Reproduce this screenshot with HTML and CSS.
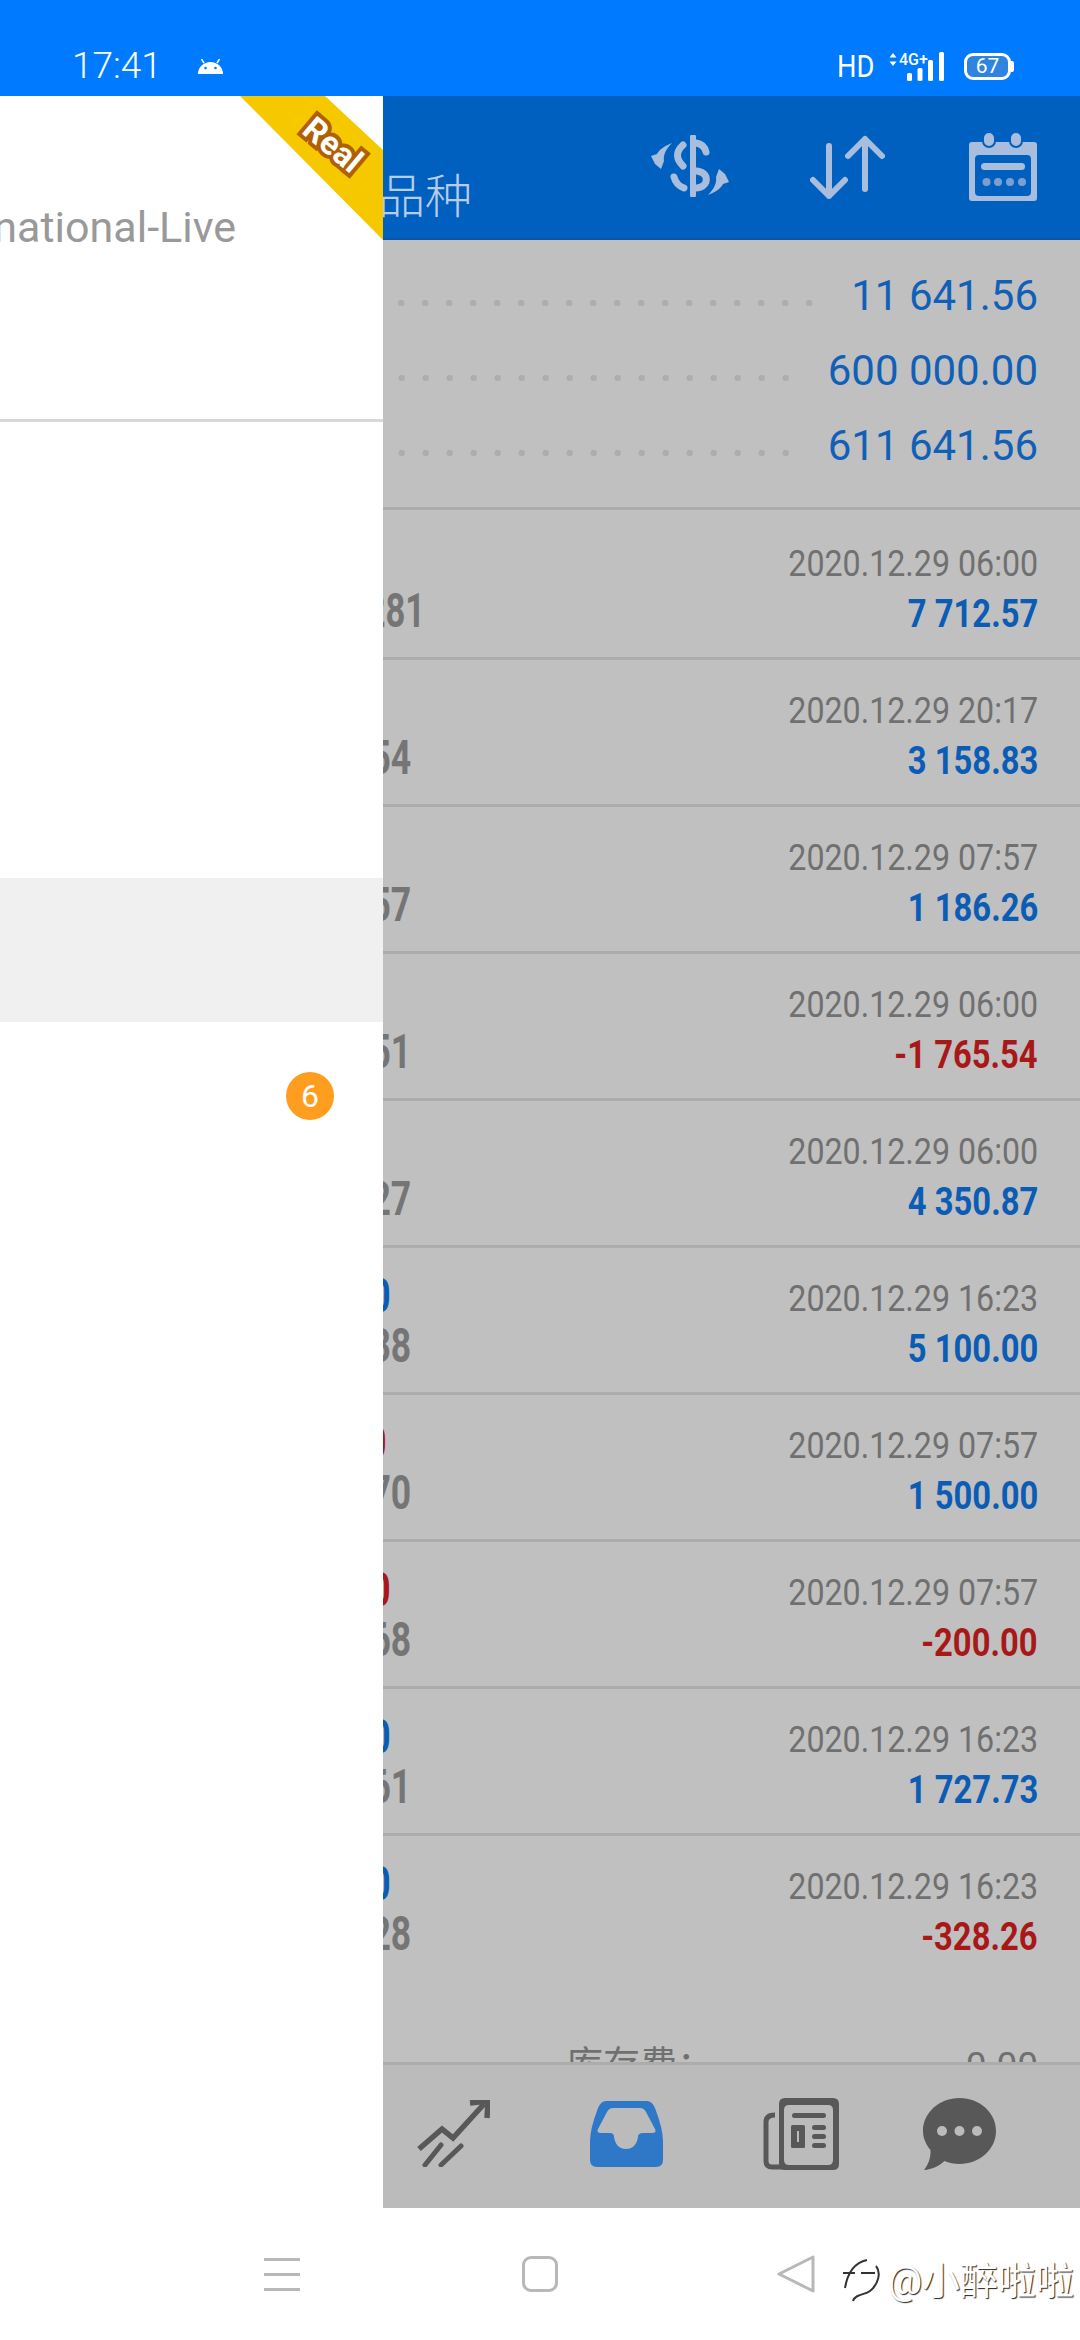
FILE: index.html
```html
<!DOCTYPE html>
<html>
<head>
    <title>历史</title>
    <link rel="stylesheet" href="styles.css">
</head>
<body>
    <div class="status-bar">
        <span class="time">17:41</span>
        <svg class="android" viewBox="0 0 25 15"><path d="M0 15a12.500 12 0 0 1 25 0z" fill="#fff"/><path d="M6 4L3.500 0M19 4l2.500-4" stroke="#fff" stroke-width="1.500"/><circle cx="7.500" cy="9" r="1.300" fill="#007aff"/><circle cx="17.500" cy="9" r="1.300" fill="#007aff"/></svg>
        <span class="hd">HD</span>
        <svg class="signal" viewBox="0 0 56 29">
            <path d="M4 1l3.500 4.500h-7zM4 14L.5 9.500h7z" fill="#fff"/>
            <text x="10" y="13" class="signal-text">4G+</text>
            <rect x="18" y="21" width="5" height="8" rx="1.500" fill="#fff"/>
            <rect x="28.500" y="16" width="5" height="13" rx="1.500" fill="#fff"/>
            <rect x="39" y="8" width="5" height="21" rx="1.500" fill="#fff"/>
            <rect x="50" y="0" width="5" height="29" rx="1.500" fill="#fff"/>
        </svg>
        <div class="battery"><span>67</span></div>
    </div>

    <div class="main">
        <div class="app">
            <div class="app-bar">
                <div class="app-title">所有品种</div>
                <svg class="icon-dollar" viewBox="0 0 80 62">
                    <path d="M43 2V60" stroke="#a8bedc" stroke-width="6" stroke-linecap="round"/>
                    <path d="M46 8Q54 9 56 17M33 10Q22 20 33 31M24 42Q26 50 34 53M47 36Q58 38 56 47Q54 52 47 53" fill="none" stroke="#a8bedc" stroke-width="7" stroke-linecap="round"/>
                    <path d="M22 8C14 11 9 15 7 19L1 21L5 29L11 34L14 26C13 20 16 14 22 8Z" fill="#a8bedc"/>
                    <path d="M22 8C14 11 9 15 7 19L1 21L5 29L11 34L14 26C13 20 16 14 22 8Z" fill="#a8bedc" transform="rotate(180 40 34)"/>
                </svg>
                <svg class="icon-sort" viewBox="0 0 75 64">
                    <path d="M19 11V61M3 45L19 61L35 45M55 4V54M38 21L55 4L72 21" fill="none" stroke="#a8bedc" stroke-width="6" stroke-linecap="round" stroke-linejoin="round"/>
                </svg>
                <svg class="icon-calendar" viewBox="0 0 70 70">
                    <path fill-rule="evenodd" d="M3 10H65Q68 10 68 13V66Q68 69 65 69H3Q0 69 0 66V13Q0 10 3 10ZM10 23Q6 23 6 27V60Q6 64 10 64H58Q62 64 62 60V27Q62 23 58 23Z" fill="#a8bedc"/>
                    <rect x="14" y="0" width="12" height="15" rx="6" fill="#a8bedc" stroke="#0060c0" stroke-width="2"/>
                    <rect x="41" y="0" width="12" height="15" rx="6" fill="#a8bedc" stroke="#0060c0" stroke-width="2"/>
                    <rect x="12" y="31" width="44" height="7" rx="3.500" fill="#a8bedc"/>
                    <g fill="#7d9fd0"><circle cx="17.500" cy="50" r="4"/><circle cx="29" cy="50" r="4"/><circle cx="41" cy="50" r="4"/><circle cx="53" cy="50" r="4"/></g>
                </svg>
            </div>

            <div class="list">
                <div class="summary">
                    <div class="sum-row"><span class="sum-label">利润：</span><span class="leader"></span><span class="sum-value">11 641.56</span></div>
                    <div class="sum-row"><span class="sum-label">信用：</span><span class="leader"></span><span class="sum-value">600 000.00</span></div>
                    <div class="sum-row"><span class="sum-label">结余：</span><span class="leader"></span><span class="sum-value">611 641.56</span></div>
                </div>

                <div class="row row-first">
                    <div class="left left-wide"><div class="l1 l1-short blue"><span>0.50</span></div><div class="l2"><span>1.22281</span></div></div>
                    <div class="right"><div class="date">2020.12.29 06:00</div><div class="amount blue"><span>7 712.57</span></div></div>
                </div>
                <div class="row">
                    <div class="left"><div class="l1 l1-short blue"><span>0.50</span></div><div class="l2"><span>1.22154</span></div></div>
                    <div class="right"><div class="date">2020.12.29 20:17</div><div class="amount blue"><span>3 158.83</span></div></div>
                </div>
                <div class="row">
                    <div class="left"><div class="l1 l1-short blue"><span>0.10</span></div><div class="l2"><span>1.22157</span></div></div>
                    <div class="right"><div class="date">2020.12.29 07:57</div><div class="amount blue"><span>1 186.26</span></div></div>
                </div>
                <div class="row">
                    <div class="left"><div class="l1 l1-short red"><span>0.10</span></div><div class="l2"><span>1.22651</span></div></div>
                    <div class="right"><div class="date">2020.12.29 06:00</div><div class="amount red"><span>-1 765.54</span></div></div>
                </div>
                <div class="row">
                    <div class="left"><div class="l1 l1-short teal"><span>0.31</span></div><div class="l2"><span>1.22727</span></div></div>
                    <div class="right"><div class="date">2020.12.29 06:00</div><div class="amount blue"><span>4 350.87</span></div></div>
                </div>
                <div class="row">
                    <div class="left"><div class="l1 blue"><span>0.50</span></div><div class="l2"><span>1.22138</span></div></div>
                    <div class="right"><div class="date">2020.12.29 16:23</div><div class="amount blue"><span>5 100.00</span></div></div>
                </div>
                <div class="row">
                    <div class="left"><div class="l1 l1-mid red"><span>0.50</span></div><div class="l2"><span>1.22170</span></div></div>
                    <div class="right"><div class="date">2020.12.29 07:57</div><div class="amount blue"><span>1 500.00</span></div></div>
                </div>
                <div class="row">
                    <div class="left"><div class="l1 red"><span>0.50</span></div><div class="l2"><span>1.22168</span></div></div>
                    <div class="right"><div class="date">2020.12.29 07:57</div><div class="amount red"><span>-200.00</span></div></div>
                </div>
                <div class="row">
                    <div class="left"><div class="l1 blue"><span>0.50</span></div><div class="l2"><span>1.22161</span></div></div>
                    <div class="right"><div class="date">2020.12.29 16:23</div><div class="amount blue"><span>1 727.73</span></div></div>
                </div>
                <div class="row row-last">
                    <div class="left"><div class="l1 blue"><span>0.50</span></div><div class="l2"><span>1.22128</span></div></div>
                    <div class="right"><div class="date">2020.12.29 16:23</div><div class="amount red"><span>-328.26</span></div></div>
                </div>

                <div class="fee-row"><span>库存费：</span><span>0.00</span></div>
            </div>

            <div class="tab-bar">
                <svg class="tab" viewBox="0 0 73 67" width="73" height="67">
                    <path d="M2 49L25 29L36 38L67 4M53 3L71 1L70 18" fill="none" stroke="#585858" stroke-width="5.500" stroke-linejoin="miter"/>
                    <path d="M8 65L24 45M24 65L44 46" fill="none" stroke="#585858" stroke-width="5" stroke-linecap="round"/>
                </svg>
                <svg class="tab" viewBox="0 0 73 66" width="73" height="66">
                    <path fill-rule="evenodd" d="M16 0H57Q62 0 65 7Q73 28 73 40V59Q73 66 66 66H7Q0 66 0 59V40Q0 28 8 7Q11 0 16 0ZM23 7Q19 7 17 11L8 28Q6 32 11 32H20Q24 32 24 36Q26 48 36 48Q46 48 48 36Q48 32 53 32H62Q67 32 65 28L56 11Q54 7 50 7Z" fill="#2f78c8"/>
                </svg>
                <svg class="tab" viewBox="0 0 76 72" width="76" height="72">
                    <path fill-rule="evenodd" d="M22 0H70Q76 0 76 6V66Q76 72 70 72H22Q16 72 16 66V6Q16 0 22 0ZM26 7Q21 7 21 12V62Q21 67 26 67H65Q70 67 70 62V12Q70 7 65 7Z" fill="#585858"/>
                    <path d="M12 17Q3 17 3 24V63Q3 69 9 69H20" fill="none" stroke="#585858" stroke-width="5"/>
                    <rect x="29" y="15" width="34" height="5" rx="2.500" fill="#585858"/>
                    <rect x="28" y="27" width="14" height="23" rx="1.500" fill="#585858"/>
                    <rect x="34" y="33" width="2" height="11" fill="#bbb"/>
                    <rect x="49" y="27" width="14" height="5" rx="2.500" fill="#585858"/>
                    <rect x="49" y="36" width="14" height="5" rx="2.500" fill="#585858"/>
                    <rect x="49" y="45" width="14" height="5" rx="2.500" fill="#585858"/>
                </svg>
                <svg class="tab tab-chat" viewBox="0 0 73 72" width="73" height="72">
                    <path d="M36.500 0C56.500 0 73 14.500 73 33C73 51.500 56.500 66 36.500 66C31 66 26 65 21.500 63C16 68 9 71.500 1 72C5 67 8 60 7.500 52C3 46.500 0 40 0 33C0 14.500 16.500 0 36.500 0Z" fill="#585858"/>
                    <g fill="#bbb"><circle cx="19" cy="33" r="5"/><circle cx="36.500" cy="33" r="5"/><circle cx="54" cy="33" r="5"/></g>
                </svg>
            </div>
        </div>

        <div class="drawer">
            <svg class="ribbon" viewBox="0 0 143 144"><path d="M0 0H85L143 54V144Z" fill="#f6c800"/></svg>
            <span class="ribbon-text">Real</span>
            <div class="drawer-head"><span>Server-International-Live</span></div>
            <div class="drawer-item drawer-item-active"></div>
            <div class="drawer-item drawer-item-badge"><span class="badge">6</span></div>
        </div>
    </div>

    <div class="nav-bar">
        <div class="nav-menu"><i></i><i></i><i></i></div>
        <div class="nav-home"></div>
        <svg class="nav-back" viewBox="0 0 38 38"><path d="M36 2V36L2 19Z" fill="none" stroke="#b8b8b8" stroke-width="3" stroke-linejoin="round"/></svg>
        <div class="watermark">
            <svg class="wm-logo" viewBox="0 0 38 46"><path d="M2 30C4 18 10 5 24 2M33 8C38 14 36 26 27 33C22 37 12 36 10 43M0 15H12M18 15H32" fill="none" stroke="#333" stroke-width="2"/></svg>
            <span>@小醉啦啦</span>
        </div>
    </div>
</body>
</html>
```

FILE: styles.css
```css
* {
    box-sizing: border-box;
}

body {
    margin: 0;
    width: 1080px;
    height: 2340px;
    display: flex;
    flex-direction: column;
    overflow: hidden;
    background: #fff;
    font-family: Roboto, "Noto Sans CJK SC", sans-serif;
}

/* status bar */
.status-bar {
    height: 96px;
    flex: none;
    display: flex;
    align-items: center;
    padding: 36px 69px 0 72px;
    background: #007aff;
    color: #fff;
}

.time {
    font-size: 37px;
    font-weight: 300;
    line-height: 60px;
}

.android {
    width: 25px;
    height: 15px;
    margin-left: 36px;
}

.hd {
    margin-left: auto;
    font-size: 31px;
    transform: scaleX(.88);
    transform-origin: right center;
}

.signal {
    width: 56px;
    height: 29px;
    margin-left: 15px;
    overflow: visible;
}

.signal-text {
    font-size: 16px;
    font-weight: 500;
    font-family: Roboto, sans-serif;
    fill: #fff;
}

.battery {
    position: relative;
    width: 47px;
    height: 27px;
    margin-left: 19px;
    border: 3px solid #fff;
    border-radius: 9px;
    background: #2f84e0;
    font-size: 21px;
    line-height: 21px;
    text-align: center;
}

.battery::after {
    content: "";
    position: absolute;
    right: -6px;
    top: 5px;
    width: 3px;
    height: 11px;
    border-radius: 0 2px 2px 0;
    background: #fff;
}

/* app */
.main {
    flex: 1;
    position: relative;
    overflow: hidden;
}

.app {
    height: 100%;
    display: flex;
    flex-direction: column;
}

.app-bar {
    height: 144px;
    flex: none;
    display: flex;
    align-items: flex-start;
    background: #0060c0;
    border-bottom: 2px solid #0a55a5;
}

.app-title {
    width: 472px;
    padding-top: 68px;
    font-size: 47px;
    line-height: 66px;
    font-weight: 300;
    text-align: right;
    color: #b8cce8;
    white-space: nowrap;
}

.icon-dollar {
    width: 80px;
    height: 62px;
    margin: 39px 0 0 178px;
}

.icon-sort {
    width: 75px;
    height: 64px;
    margin: 39px 0 0 80px;
}

.icon-calendar {
    width: 70px;
    height: 70px;
    margin: 36px 0 0 84px;
}

.list {
    flex: 1;
    min-height: 0;
    overflow: hidden;
    background: #c0c0c0;
}

.summary {
    height: 270px;
    padding-top: 18px;
    border-bottom: 3px solid #acacac;
}

.sum-row {
    height: 75px;
    display: flex;
    align-items: center;
    padding: 0 42px 0 24px;
}

.sum-label {
    font-size: 37px;
    color: #707070;
}

.leader {
    flex: 1;
    height: 8px;
    margin: 15px 30px 0 10px;
    background: radial-gradient(circle at center, #adadad 3px, transparent 3.500px) right center / 24px 8px repeat-x;
}

.sum-value {
    font-size: 42px;
    color: #1060b8;
}

.row {
    height: 147px;
    display: flex;
    justify-content: space-between;
    align-items: flex-start;
    padding: 23px 42px 0 0;
    border-bottom: 3px solid #acacac;
    white-space: nowrap;
}

.row-first {
    height: 150px;
    padding-top: 26px;
}

.row-last {
    border-bottom: 0;
}

.left {
    width: 411px;
    text-align: right;
    font-size: 48px;
    font-weight: 700;
    line-height: 50px;
}

.left-wide {
    width: 425px;
}

.left span,
.amount span {
    display: inline-block;
    transform-origin: right center;
}

.left span {
    transform: scaleX(.74);
}

.left-wide span {
    transform: scaleX(.72);
}

.l1 {
    padding-right: 20px;
}

.left-wide .l1 {
    padding-right: 42px;
}

.l1-short {
    padding-right: 28px;
}

.l1-mid {
    padding-right: 24px;
}

.l2 {
    color: #757575;
}

.right {
    text-align: right;
    padding-top: 2px;
}

.date {
    font-size: 37px;
    line-height: 51px;
    color: #707070;
    transform: scaleX(.87);
    transform-origin: right center;
}

.amount {
    font-size: 39px;
    font-weight: 700;
    line-height: 51px;
}

.amount span {
    transform: scaleX(.84);
}

.blue {
    color: #0b5cb5;
}

.red {
    color: #a81818;
}

.teal {
    color: #1a6fa0;
}

.fee-row {
    display: flex;
    justify-content: space-between;
    margin-top: 58px;
    padding: 0 42px 0 566px;
    font-size: 37px;
    line-height: 50px;
    color: #707070;
}

.tab-bar {
    height: 146px;
    flex: none;
    display: flex;
    align-items: center;
    justify-content: flex-end;
    gap: 100px;
    padding: 0 84px 6px 0;
    background: #bbb;
    border-top: 3px solid #acacac;
}

.tab-chat {
    margin-left: -16px;
}

/* drawer */
.drawer {
    position: absolute;
    left: 0;
    top: 0;
    bottom: 0;
    width: 383px;
    background: #fff;
    overflow: hidden;
}

.ribbon {
    position: absolute;
    left: 240px;
    top: 0;
    width: 143px;
    height: 144px;
}

.ribbon-text {
    position: absolute;
    left: 300px;
    top: 30px;
    font-size: 33px;
    font-weight: 700;
    line-height: 38px;
    color: #fff;
    -webkit-text-stroke: 8px #b06000;
    paint-order: stroke fill;
    transform: rotate(40deg);
}

.drawer-head {
    height: 326px;
    display: flex;
    justify-content: flex-end;
    padding: 104px 147px 0 0;
    border-bottom: 3px solid #d8d8d8;
    font-size: 43px;
    line-height: 54px;
    color: #999;
    white-space: nowrap;
}

.drawer-item {
    height: 144px;
}

.drawer-item-active {
    margin-top: 456px;
    background: #f0f0f0;
}

.drawer-item-badge {
    display: flex;
    justify-content: flex-end;
    padding: 50px 49px 0 0;
}

.badge {
    width: 48px;
    height: 48px;
    border-radius: 50%;
    background: #ff9d1f;
    color: #fff;
    font-size: 32px;
    line-height: 48px;
    text-align: center;
}

/* system nav */
.nav-bar {
    height: 132px;
    flex: none;
    position: relative;
    display: flex;
    align-items: center;
    padding: 0 0 0 264px;
    background: #fff;
}

.nav-menu {
    width: 36px;
    height: 33px;
    display: flex;
    flex-direction: column;
    justify-content: space-between;
}

.nav-menu i {
    display: block;
    height: 3px;
    background: #b8b8b8;
}

.nav-home {
    width: 36px;
    height: 36px;
    margin-left: 222px;
    border: 3px solid #b8b8b8;
    border-radius: 9px;
}

.nav-back {
    width: 38px;
    height: 38px;
    margin-left: 219px;
}

.watermark {
    position: absolute;
    left: 843px;
    top: 50px;
    display: flex;
    align-items: center;
    gap: 7px;
    font-size: 38px;
    line-height: 44px;
    color: #fff;
    text-shadow: 1px 1px 1px #222;
    white-space: nowrap;
}

.wm-logo {
    width: 38px;
    height: 46px;
}
```
